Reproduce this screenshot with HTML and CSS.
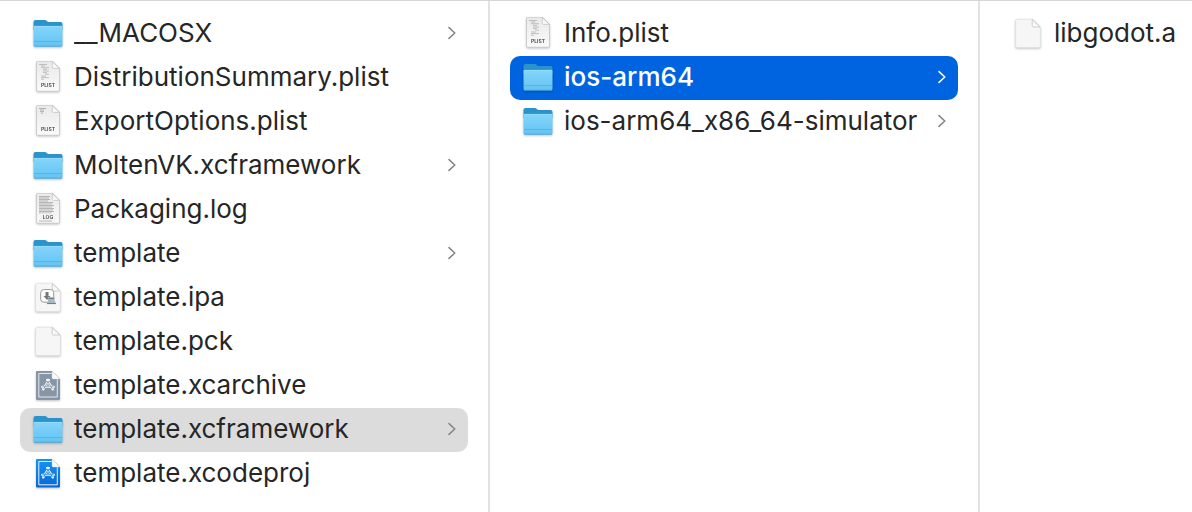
FILE: index.html
```
<!DOCTYPE html>
<html lang="en">
<head>
    <meta charset="UTF-8">
    <meta name="viewport" content="width=device-width, initial-scale=1.0">
    <title>template.xcframework</title>
    <link rel="stylesheet" href="styles.css">
</head>
<body>
    <!-- Shared icons -->
    <svg class="sprite" aria-hidden="true">
        <defs>
            <linearGradient id="folder-front" x1="0" y1="0" x2="0" y2="1">
                <stop offset="0" stop-color="#84d5fb"/>
                <stop offset="1" stop-color="#62c3f3"/>
            </linearGradient>
            <linearGradient id="paper" x1="0" y1="0" x2="0" y2="1">
                <stop offset="0" stop-color="#e9e9e9"/>
                <stop offset="1" stop-color="#fafafa"/>
            </linearGradient>
            <linearGradient id="fold" x1="0" y1="1" x2="1" y2="0">
                <stop offset="0" stop-color="#ffffff"/>
                <stop offset="0.5" stop-color="#f4f4f4"/>
                <stop offset="1" stop-color="#d8d8d8"/>
            </linearGradient>
            <linearGradient id="blue" x1="0" y1="0" x2="0" y2="1">
                <stop offset="0" stop-color="#1593f5"/>
                <stop offset="1" stop-color="#0869d6"/>
            </linearGradient>
        </defs>

        <symbol id="icon-folder" viewBox="0 -1 32 32">
            <path d="M1.5 4Q1.5 2 3.5 2H12.6Q13.8 2 14.6 2.8L15.3 3.4Q16 4 17 4H28.6Q30.5 4 30.5 6V12H1.5Z" fill="#2b93cb"/>
            <path d="M1.5 9Q1.5 8 2.5 8H29.5Q30.5 8 30.5 9V27Q30.5 28.5 29 28.5H3Q1.5 28.5 1.5 27Z" fill="url(#folder-front)"/>
            <path d="M2 8.4H30" stroke="#9addfb" stroke-width="0.8"/>
            <path d="M2 23.5H30" stroke="#4fb0e2" stroke-width="0.8"/>
            <path d="M2 28.2H30" stroke="#409fd2" stroke-width="0.7"/>
        </symbol>

        <symbol id="icon-page" viewBox="0 0 32 32">
            <path d="M5.5 0.3H20.5L27.5 7.3V29Q27.5 30.2 26.3 30.2H5.7Q4.5 30.2 4.5 29V1.3Q4.5 0.3 5.5 0.3Z" fill="url(#paper)" stroke="#bcbcbc" stroke-width="0.6"/>
            <path d="M20.3 0.4V6.2Q20.3 7.4 21.5 7.4H27.4Z" fill="url(#fold)" stroke="#b4b4b4" stroke-width="0.6"/>
        </symbol>

        <symbol id="icon-plist" viewBox="0 0 32 32">
            <use href="#icon-page"/>
            <path d="M7 3.5H15M9 5H13M9 6.7H17M11 8.3H15M11 10H17M11 11.6H15M13 13.2H17M9 15H14M9 16.6H17M9 18.2H12" stroke="#b3b3b3" stroke-width="0.8"/>
        </symbol>

        <symbol id="icon-plist-short" viewBox="0 0 32 32">
            <use href="#icon-page"/>
            <path d="M7 3.5H14M8 5H12M8 6.6H12M9 8.2H11" stroke="#ababab" stroke-width="0.9"/>
        </symbol>

        <symbol id="icon-log" viewBox="0 0 32 32">
            <use href="#icon-page"/>
            <path d="M7 3.5H18M7 5H17M7 6.5H18M7 8H16M7 9.5H21M7 11H20M7 12.5H22M7 14H20M7 15.5H22M7 17H21M7 18.5H22M7 20H20M7 28H20" stroke="#a6a6a6" stroke-width="0.8"/>
            <rect x="8" y="20.5" width="16" height="6.5" fill="#f3f3f3"/>
        </symbol>

        <symbol id="icon-blank" viewBox="0 -1 32 32">
            <path d="M5 1.3H20.5L28.3 9V28.2Q28.3 29.6 27 29.6H5Q3.7 29.6 3.7 28.2V2.6Q3.7 1.3 5 1.3Z" fill="#f6f6f6" stroke="#dedede" stroke-width="0.6"/>
            <path d="M20.2 1.4V7.8Q20.2 9 21.4 9H28.1Z" fill="url(#fold)" stroke="#bdbdbd" stroke-width="0.7"/>
        </symbol>

        <symbol id="icon-ipa" viewBox="0 0 32 32">
            <use href="#icon-blank"/>
            <rect x="8.7" y="8.6" width="13" height="12.6" rx="3" fill="#fff" stroke="#999" stroke-width="1"/>
            <path d="M13.5 11H16.5V15H18.5L15 19L11.5 15H13.5Z" fill="#777"/>
            <path d="M16 16H22.5V19L24 23H15L16 20Z" fill="#a9b8c1"/>
            <path d="M16.5 17.5H22M15 22.6H24" stroke="#64747f" stroke-width="0.9"/>
        </symbol>

        <symbol id="icon-archive" viewBox="0 -1 32 32">
            <path d="M5 1H20L28 9V28.8Q28 30 26.8 30H5.2Q4 30 4 28.8V2Q4 1 5 1Z" fill="#8796a7"/>
            <path d="M19.5 3.5H6.8V27H25.3V9.3" fill="none" stroke="#edf1f4" stroke-width="0.9"/>
            <path d="M20 1V7.8Q20 9 21.2 9H28Z" fill="#fafafa" stroke="#c4cbd1" stroke-width="0.4"/>
            <g class="tools" stroke="#fff">
                <path d="M16.8 10L11.2 19.4M15.2 10L20.8 19.4M10.2 16.8H21.8" stroke-width="2.3"/>
                <path d="M16.3 11.2L11.8 18.8M15.7 11.2L20.2 18.8M10.6 16.8H21.4" stroke="#8796a7" stroke-width="0.9"/>
            </g>
        </symbol>

        <symbol id="icon-project" viewBox="0 -1 32 32">
            <path d="M5 1H20L28 9V28.3Q28 29.5 26.8 29.5H5.2Q4 29.5 4 28.3V2Q4 1 5 1Z" fill="url(#blue)"/>
            <path d="M19.5 3.5H6.8V26.8H25.3V9.3" fill="none" stroke="#fff" stroke-width="0.9"/>
            <path d="M20 1V7.8Q20 9 21.2 9H28Z" fill="#fafafa" stroke="#c4d7e8" stroke-width="0.4"/>
            <g class="tools" stroke="#fff">
                <path d="M16.8 10L11.2 19.4M15.2 10L20.8 19.4M10.2 16.8H21.8" stroke-width="2.3"/>
                <path d="M16.3 11.2L11.8 18.8M15.7 11.2L20.2 18.8M10.6 16.8H21.4" stroke="#1180e6" stroke-width="0.9"/>
            </g>
        </symbol>

        <symbol id="icon-chevron" viewBox="0 0 8 14">
            <path d="M1 1.6L6.8 7L1 12.4" fill="none" stroke="currentColor" stroke-width="1.5" stroke-linecap="round" stroke-linejoin="round"/>
        </symbol>
    </svg>

    <main class="browser">
        <ul class="column">
            <li><a class="item" href="#"><svg class="icon"><use href="#icon-folder"/></svg><span class="name">__MACOSX</span><svg class="chevron"><use href="#icon-chevron"/></svg></a></li>
            <li><a class="item" href="#"><svg class="icon"><use href="#icon-plist"/><text x="16" y="26" class="badge">PLIST</text></svg><span class="name">DistributionSummary.plist</span></a></li>
            <li><a class="item" href="#"><svg class="icon"><use href="#icon-plist-short"/><text x="16" y="26" class="badge">PLIST</text></svg><span class="name">ExportOptions.plist</span></a></li>
            <li><a class="item" href="#"><svg class="icon"><use href="#icon-folder"/></svg><span class="name">MoltenVK.xcframework</span><svg class="chevron"><use href="#icon-chevron"/></svg></a></li>
            <li><a class="item" href="#"><svg class="icon"><use href="#icon-log"/><text x="16" y="26" class="badge">LOG</text></svg><span class="name">Packaging.log</span></a></li>
            <li><a class="item" href="#"><svg class="icon"><use href="#icon-folder"/></svg><span class="name">template</span><svg class="chevron"><use href="#icon-chevron"/></svg></a></li>
            <li><a class="item" href="#"><svg class="icon"><use href="#icon-ipa"/></svg><span class="name">template.ipa</span></a></li>
            <li><a class="item" href="#"><svg class="icon"><use href="#icon-blank"/></svg><span class="name">template.pck</span></a></li>
            <li><a class="item" href="#"><svg class="icon"><use href="#icon-archive"/></svg><span class="name">template.xcarchive</span></a></li>
            <li><a class="item open" href="#"><svg class="icon"><use href="#icon-folder"/></svg><span class="name">template.xcframework</span><svg class="chevron"><use href="#icon-chevron"/></svg></a></li>
            <li><a class="item" href="#"><svg class="icon"><use href="#icon-project"/></svg><span class="name">template.xcodeproj</span></a></li>
        </ul>

        <ul class="column">
            <li><a class="item" href="#"><svg class="icon"><use href="#icon-plist"/><text x="16" y="26" class="badge">PLIST</text></svg><span class="name">Info.plist</span></a></li>
            <li><a class="item selected" href="#"><svg class="icon"><use href="#icon-folder"/></svg><span class="name">ios-arm64</span><svg class="chevron"><use href="#icon-chevron"/></svg></a></li>
            <li><a class="item" href="#"><svg class="icon"><use href="#icon-folder"/></svg><span class="name">ios-arm64_x86_64-simulator</span><svg class="chevron"><use href="#icon-chevron"/></svg></a></li>
        </ul>

        <ul class="column">
            <li><a class="item" href="#"><svg class="icon"><use href="#icon-blank"/></svg><span class="name">libgodot.a</span></a></li>
        </ul>
    </main>
</body>
</html>
```
FILE: styles.css
```
* {
    box-sizing: border-box;
}

body {
    margin: 0;
    background: #ffffff;
    color: #262626;
    font-family: Inter, "Liberation Sans", sans-serif;
    font-size: 26px;
    line-height: 32px;
}

.sprite {
    position: absolute;
    width: 0;
    height: 0;
}

.browser {
    display: grid;
    grid-template-columns: minmax(200px, 490px) minmax(200px, 490px) 1fr;
    min-height: 100vh;
    border-top: 1px solid #d6d6d6;
}

.column {
    min-width: 0;
    margin: 0;
    padding: 11px 20px;
    border-right: 2px solid #e2e2e2;
    list-style: none;
}

.column:last-child {
    border-right: none;
    padding-right: 0;
}

.item {
    display: flex;
    align-items: center;
    gap: 10px;
    height: 44px;
    padding: 0 12px 2px;
    border-radius: 10px;
    color: inherit;
    text-decoration: none;
}

.column:last-child .item {
    padding-right: 0;
}

.name {
    flex: 1;
    min-width: 0;
    overflow: hidden;
    white-space: nowrap;
    text-overflow: ellipsis;
}

.icon {
    flex: none;
    width: 32px;
    height: 32px;
    filter: drop-shadow(0 1px 1px rgba(0, 0, 0, 0.25));
}

.chevron {
    flex: none;
    width: 8px;
    height: 14px;
    color: #858585;
}

.badge {
    font-size: 5px;
    font-weight: 600;
    text-anchor: middle;
    fill: #444444;
}

.tools {
    fill: none;
    stroke-linecap: round;
}

.open {
    background: #dcdcdc;
}

.selected {
    background: #0064e1;
    color: #ffffff;
}

.selected .name {
    font-weight: 500;
}

.selected .chevron {
    color: #ffffff;
}
```
